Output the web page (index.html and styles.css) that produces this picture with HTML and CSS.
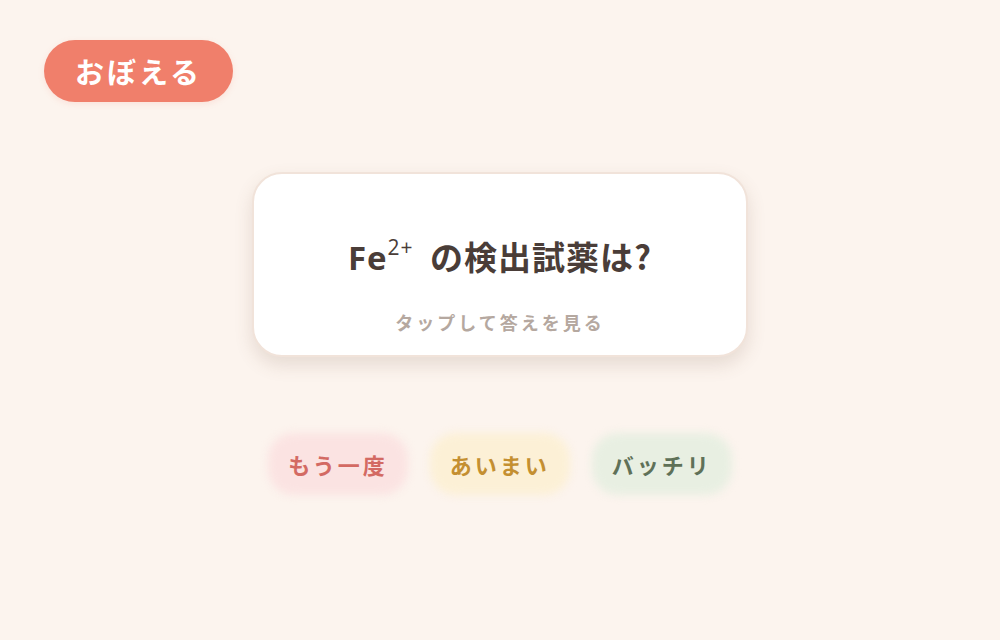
FILE: index.html
```html
<!DOCTYPE html>
<html lang="ja">
<head>
    <meta charset="UTF-8">
    <meta name="viewport" content="width=device-width, initial-scale=1.0">
    <title>おぼえる</title>
    <link rel="stylesheet" href="styles.css">
</head>
<body>

    <header class="top-bar">
        <div class="mode-pill">おぼえる</div>
    </header>

    <main class="study">
        <div class="card">
            <h2 class="question"><span class="formula">Fe<sup>2+</sup></span> の検出試薬は?</h2>
            <p class="hint">タップして答えを見る</p>
        </div>

        <div class="grades">
            <button class="grade grade-again">もう一度</button>
            <button class="grade grade-vague">あいまい</button>
            <button class="grade grade-good">バッチリ</button>
        </div>
    </main>

</body>
</html>
```

FILE: styles.css
```css
body {
    font-family: "Noto Sans CJK JP", "Noto Sans", sans-serif;
    background: #fcf4ee;
    color: #4a3d38;
    margin: 0;
    height: 640px;
    overflow: hidden;
}
.top-bar {
    padding: 40px 44px 0;
    display: flex;
}
.mode-pill {
    background: #f07f6b;
    color: white;
    font-size: 29px;
    font-weight: 700;
    letter-spacing: 3px;
    height: 62px;
    width: 189px;
    border-radius: 31px;
    display: flex;
    align-items: center;
    justify-content: center;
    box-shadow: 0px 2px 6px rgba(240, 127, 107, 0.15);
}
.study {
    display: flex;
    flex-direction: column;
    align-items: center;
    padding-top: 70px;
}
.card {
    background: #fff;
    width: 492px;
    height: 181px;
    border: 2px solid #f1e3da;
    border-radius: 30px;
    box-shadow: 0px 8px 18px rgba(120, 90, 70, 0.16);
    display: flex;
    flex-direction: column;
    align-items: center;
}
.question {
    margin: 57px 0 0;
    font-size: 33px;
    font-weight: 700;
    line-height: 50px;
    letter-spacing: 1px;
}
.formula {
    font-family: "Open Sans", "Noto Sans", sans-serif;
    font-weight: 700;
}
.question sup {
    font-size: 21px;
    font-weight: 400;
    vertical-align: 15px;
    line-height: 0;
    margin-right: 8px;
}
.hint {
    margin: 26px 0 0;
    font-size: 18px;
    font-weight: 700;
    color: #b5a8a0;
    letter-spacing: 3px;
}
.grades {
    display: flex;
    gap: 22px;
    margin-top: 76px;
}
.grade {
    font-family: inherit;
    font-size: 22px;
    font-weight: 700;
    letter-spacing: 3px;
    height: 62px;
    padding: 0 20px;
    border: none;
    border-radius: 26px;
    cursor: pointer;
    position: relative;
    background: none;
    z-index: 0;
}
.grade::before {
    content: "";
    position: absolute;
    inset: 0;
    border-radius: 26px;
    filter: blur(4px);
    z-index: -1;
}
.grade-again { color: #d36a63; }
.grade-again::before { background: #fbe3e2; }
.grade-vague { color: #c48f31; }
.grade-vague::before { background: #fcf0d6; }
.grade-good { color: #5f7158; }
.grade-good::before { background: #e8efe2; }
```
